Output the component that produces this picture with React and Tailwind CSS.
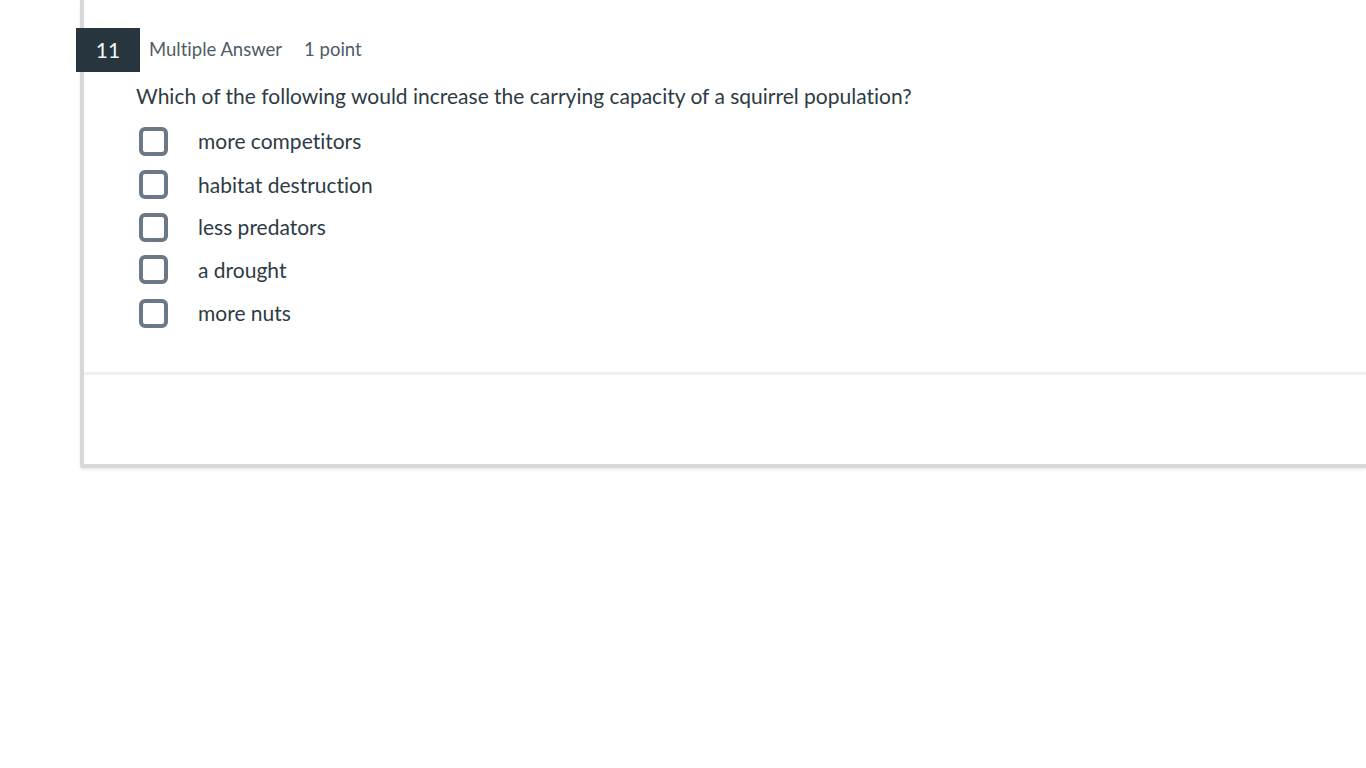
import React from 'react';

const options = [
  { label: 'more competitors', row: 'h-[44px]' },
  { label: 'habitat destruction', row: 'h-[43px]' },
  { label: 'less predators', row: 'h-[42px]' },
  { label: 'a drought', row: 'h-[43px]' },
  { label: 'more nuts', row: 'h-[44px]' },
];

const App = () => {
  return (
    <div className="min-h-screen bg-white font-['Lato','Noto_Sans',sans-serif] text-[#2d3b45] [font-variant-ligatures:none]">
      <div className="ml-[80px] border-l-4 border-b-4 border-[#d7d9dd] rounded-bl-[3px] shadow-[0_2px_3px_rgba(0,0,0,0.08)]">
        <div className="pt-[28px]">
          {/* Question header */}
          <div className="-ml-[8px] flex items-center">
            <div className="flex h-[44px] w-[64px] items-center justify-center bg-[#27353f] text-[21px] text-[#f4f5f6]">
              11
            </div>
            <span className="ml-[9px] text-[18.5px] text-[#4f5b66]">Multiple Answer</span>
            <span className="ml-[22px] text-[18.5px] text-[#4f5b66]">1 point</span>
          </div>

          {/* Question text */}
          <p className="mt-[10px] pl-[52px] text-[21px] leading-[28px]">
            Which of the following would increase the carrying capacity of a squirrel population?
          </p>

          {/* Answers */}
          <ul className="mt-[9px] pl-[55px]">
            {options.map((opt) => (
              <li key={opt.label} className={`flex items-center ${opt.row}`}>
                <span className="h-[29px] w-[29px] shrink-0 rounded-[6px] border-[4px] border-[#6b7885]" />
                <span className="ml-[30px] text-[21px] leading-[28px]">{opt.label}</span>
              </li>
            ))}
          </ul>
        </div>

        <div className="mt-[37px] h-[3px] bg-[#eef0f1]" />
        <div className="h-[89px]" />
      </div>
    </div>
  );
};

export default App;
